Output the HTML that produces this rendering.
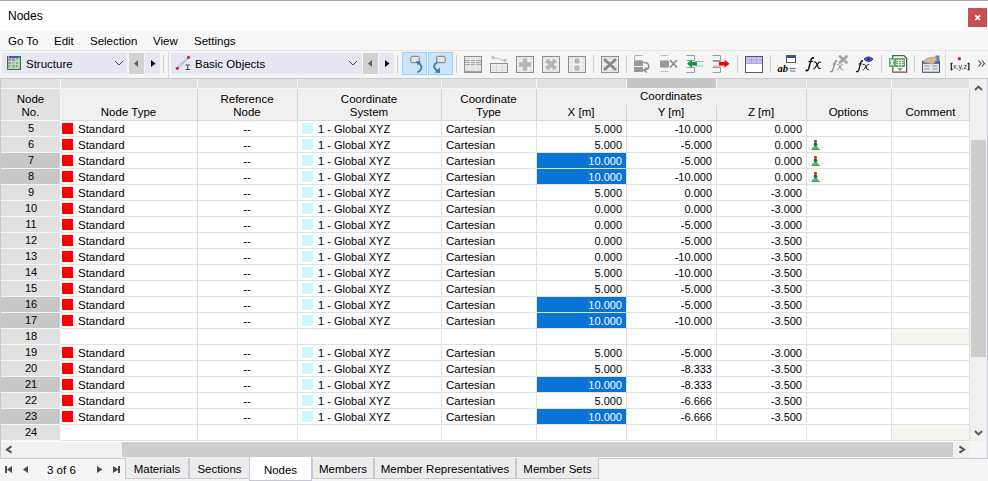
<!DOCTYPE html><html><head><meta charset="utf-8"><style>*{box-sizing:border-box}
html,body{margin:0;padding:0}
body{width:988px;height:481px;overflow:hidden;position:relative;background:#f0f0f0;font-family:"Liberation Sans",sans-serif;font-size:11px;color:#000}
div,svg{position:absolute}
#topline{left:0;top:0;width:988px;height:1px;background:#aaaaaa}
#title{left:0;top:1px;width:988px;height:30px;background:#fff}
#title .tx{left:8px;top:8px;font-size:12px;line-height:14px}
#close{left:968px;top:8px;width:19px;height:19px;background:#c75050}
#menu{left:0;top:31px;width:988px;height:19px;background:#f7f7f7}
#menu .m{top:3px;line-height:14px;font-size:11.5px}
#mline{left:0;top:50px;width:988px;height:1px;background:#e6e6e6}
#tb{left:0;top:51px;width:988px;height:27px;background:#f5f5f5}
.combo{top:53px;height:21px;background:#e6e7f2}
.cbtn{top:53px;height:21px;width:15px;background:#e6e7f2}
.cbtn.g{background:#d2d2d2}
.sep{top:55px;width:1px;height:18px;background:#d0d0d0}
.pb{top:51px;width:1px;height:27px;background:#dcdcdc}
.bb{top:52px;width:25px;height:23px;background:#cce4f7;border:1px solid #99d1ff}
.ct{top:57px;line-height:14px;font-size:11.5px}
#tbline{left:0;top:78px;width:988px;height:1px;background:#c9c9d3}
#grid{left:0;top:0;width:988px;height:481px}
.hstrip{left:1px;top:79px;width:969px;height:9px;background:#e1e1e1}
.hstripdark{top:79px;height:9px;background:#c6c6c6}
.hsep{top:79px;width:1px;height:9px;background:#f7f7f7}
.hmain{left:61px;top:89px;width:909px;height:31px;background:#f0f0f0}
.rhhead{left:1px;top:89px;width:59px;height:31px;background:#e1e1e1}
.rhstrip{left:1px;top:88px;width:969px;height:1px;background:#f7f7f7}
.hvl{width:1px;background:#d2d2d2}
.ht{text-align:center;line-height:14px;font-size:11.5px;white-space:nowrap}
.hbot{left:61px;top:120px;width:909px;height:1px;background:#d9d9d9}
.hbotrh{left:1px;top:120px;width:59px;height:1px;background:#f7f7f7}
.rh{left:1px;width:59px;height:15px;background:#e1e1e1;text-align:center;line-height:15px;font-size:11px;padding-left:1px}
.rh.sel{background:#c8c8c8}
.rl{left:61px;width:909px;height:1px;background:#e0e0e0}
.rowbg{left:61px;width:909px;height:15px;background:#fff}
.red{left:62px;width:11px;height:11px;background:#ff0000}
.cy{left:302px;width:11px;height:11px;background:#ccf7fb}
.t{line-height:15px;font-size:11px;white-space:nowrap;height:15px}
.t.c{text-align:center}
.t.r{text-align:right}
.t.w{color:#fff}
.selc{left:537px;width:89px;height:15px;background:#0a74d6}
.beige{left:892px;width:78px;height:15px;background:#f6f6ef}
.opt{left:810px}
.vl{top:121px;width:1px;height:320px;background:#e0e0e0}
#leftb{left:0;top:79px;width:1px;height:380px;background:#c9c9d3}
#rowsbg{left:61px;top:121px;width:909px;height:320px;background:#fff}
#rhbg{left:1px;top:121px;width:59px;height:320px;background:#e1e1e1}
#vsb{left:970px;top:79px;width:17px;height:362px;background:#f0f0f0}
#vthumb{left:971px;top:140px;width:15px;height:217px;background:#cdcdcd}
#rb{left:987px;top:79px;width:1px;height:380px;background:#c9c9d3}
#hsb{left:1px;top:441px;width:969px;height:17px;background:#f0f0f0;border-top:1px solid #fff}
#hthumb{left:122px;top:442px;width:831px;height:15px;background:#cdcdcd}
#corner{left:970px;top:441px;width:17px;height:17px;background:#f5f5f5}
#bline{left:0;top:458px;width:988px;height:1px;background:#c9c9d6}
#tabbar{left:0;top:459px;width:988px;height:22px;background:#f5f5f5}
.tab{top:458px;height:21px;background:#ececec;border:1px solid #c9c9d6;border-top:none;text-align:center;line-height:14px;padding-top:4px;font-size:11.5px}
.tab.act{top:457px;height:24px;background:#fff;padding-top:6px}
.nav{top:463px}
.wl60{left:60px;top:79px;width:1px;height:362px;background:#f7f7f7}
.rhl{left:1px;width:59px;height:1px;background:#f7f7f7}
.t{padding-top:1px}
</style></head><body>
<div id="topline"></div>
<div id="title"><div class="tx">Nodes</div></div>
<div id="close"><svg width="19" height="19" viewBox="0 0 19 19" style="left:0;top:0"><path d="M7.3 7.3 L12 12 M12 7.3 L7.3 12" stroke="#fff" stroke-width="1.7"/></svg></div>
<div id="menu">
<div class="m" style="left:8px">Go To</div>
<div class="m" style="left:54px">Edit</div>
<div class="m" style="left:90px">Selection</div>
<div class="m" style="left:153px">View</div>
<div class="m" style="left:194px">Settings</div>
</div>
<div id="mline"></div>
<div id="tb"></div>
<div class="combo" style="left:2px;width:125px"></div>
<div class="ct" style="left:26px">Structure</div>
<div class="cbtn g" style="left:129px"></div>
<div class="cbtn" style="left:145px"></div>
<div class="sep" style="left:163px"></div>
<div class="pb" style="left:168px"></div>
<div class="combo" style="left:171px;width:191px"></div>
<div class="ct" style="left:195px">Basic Objects</div>
<div class="cbtn g" style="left:363px"></div>
<div class="cbtn" style="left:379px"></div>
<div class="sep" style="left:397px"></div>
<div class="bb" style="left:402px"></div>
<div class="bb" style="left:428px"></div>
<div class="sep" style="left:456px"></div>
<div class="sep" style="left:593px"></div>
<div class="sep" style="left:626px"></div>
<div class="sep" style="left:737px"></div>
<div class="sep" style="left:770px"></div>
<div class="sep" style="left:881px"></div>
<div class="sep" style="left:914px"></div>
<div class="pb" style="left:945px"></div>
<div id="tbline"></div>

<svg id="icons" style="left:0;top:0" width="988" height="80" viewBox="0 0 988 80">
<!-- structure icon -->
<rect x="7" y="56" width="14" height="14" fill="#5a5a5a"/>
<rect x="8" y="56.2" width="12" height="1.8" fill="#3a5ad0"/>
<rect x="8" y="58" width="12" height="11" fill="#9c9c9c"/>
<path d="M8 61.5H20M8 64.5H20M11.5 58V69M15.5 58V69" stroke="#cfcfcf" stroke-width="1"/>
<circle cx="8.6" cy="57.2" r="0.6" fill="#fff"/>
<path d="M9.3 68.2 L18.8 58.8 L18.8 68.2 Z" fill="none" stroke="#96f096" stroke-width="1.7"/>
<!-- combo1 chevron + arrows -->
<path d="M115 61 L119 65 L123 61" fill="none" stroke="#444" stroke-width="1"/>
<path d="M134 63.5 L138 60 L138 67 Z" fill="#606060"/>
<path d="M151 60 L155.5 63.5 L151 67 Z" fill="#000"/>
<!-- basic objects icon -->
<path d="M177.5 68 L188.5 57.5" stroke="#a9c4e4" stroke-width="2.2"/>
<circle cx="177.3" cy="68.3" r="1.6" fill="#e02020"/>
<circle cx="188.5" cy="57.3" r="1.6" fill="#e02020"/>
<path d="M185.5 65H190M185.5 69.5H190M187.7 65V69.5" stroke="#505050" stroke-width="1"/>
<!-- combo2 chevron + arrows -->
<path d="M349 61 L353 65 L357 61" fill="none" stroke="#444" stroke-width="1"/>
<path d="M368 63.5 L372 60 L372 67 Z" fill="#606060"/>
<path d="M385 60 L389.5 63.5 L385 67 Z" fill="#000"/>
<!-- undo/redo buttons -->
<rect x="410.8" y="56.3" width="8.4" height="6.4" rx="1" fill="#e6e6e6" stroke="#7a7a7a" stroke-width="1"/>
<path d="M417.5 72.5 C421.5 70 423.5 66.5 418.5 62.8" fill="none" stroke="#3d7ab8" stroke-width="1.8"/>
<path d="M416 61 L421 61.5 L417.5 65.5 Z" fill="#3d7ab8"/>
<rect x="436.8" y="56.3" width="8.4" height="6.4" rx="1" fill="#e6e6e6" stroke="#7a7a7a" stroke-width="1"/>
<path d="M437.5 62 C433 64.5 433 68.5 437.5 70.5" fill="none" stroke="#3d7ab8" stroke-width="1.8"/>
<path d="M440 73 L434.5 72.5 L440 67.5 Z" fill="#3d7ab8"/>
<!-- grid icon 1 -->
<rect x="464.5" y="56.5" width="17" height="16" fill="#e4e4e4" stroke="#8e8e8e"/>
<path d="M465 60.5H481M465 62.5H481M465 64.5H481" stroke="#a6a6a6" stroke-width="1.2"/>
<path d="M470.5 57V72M475.5 57V72" stroke="#ececec" stroke-width="1"/>
<path d="M465 71.5H481" stroke="#a0a0a0" stroke-width="1"/>
<!-- grid icon 2 -->
<rect x="490.5" y="63.5" width="17" height="9" fill="#f0f0f0" stroke="#8e8e8e"/>
<path d="M491 67H507M491 70H507M496.5 64V72M502.5 64V72" stroke="#d8d8d8" stroke-width="1"/>
<path d="M493 57.5 L505 60.5" stroke="#c4c4c4" stroke-width="1.2"/>
<circle cx="493" cy="57.5" r="1.7" fill="#c0c0c0"/><circle cx="505" cy="60.5" r="1.7" fill="#c0c0c0"/>
<!-- grid icon 3 plus -->
<rect x="516.5" y="56.5" width="17" height="16" fill="#e6e6e6" stroke="#8e8e8e"/>
<path d="M517 60.5H533M517 64.5H533M517 68.5H533M521.5 57V72M528.5 57V72" stroke="#f4f4f4" stroke-width="1"/>
<path d="M525 58.5V70.5M519 64.5H531" stroke="#b6b6b6" stroke-width="4.5"/>
<!-- grid icon 4 x -->
<rect x="542.5" y="56.5" width="17" height="16" fill="#e6e6e6" stroke="#8e8e8e"/>
<path d="M543 60.5H559M543 64.5H559M543 68.5H559M547.5 57V72M554.5 57V72" stroke="#f4f4f4" stroke-width="1"/>
<path d="M546.5 60 L555.5 69 M555.5 60 L546.5 69" stroke="#b6b6b6" stroke-width="4"/>
<!-- grid icon 5 dots -->
<rect x="568.5" y="56.5" width="17" height="16" fill="#e6e6e6" stroke="#8e8e8e"/>
<path d="M569 60.5H585M569 64.5H585M569 68.5H585M573.5 57V72M580.5 57V72" stroke="#f4f4f4" stroke-width="1"/>
<circle cx="577" cy="60.8" r="2.6" fill="#b6b6b6"/><circle cx="577" cy="68.2" r="2.6" fill="#b6b6b6"/>
<!-- big X -->
<rect x="601.5" y="56.5" width="17" height="16" fill="#e6e6e6" stroke="#8e8e8e"/>
<path d="M602 60.5H618M602 64.5H618M602 68.5H618" stroke="#f4f4f4" stroke-width="1"/>
<path d="M604 59 L616 70 M616 59 L604 70" stroke="#8a8a8a" stroke-width="3"/>
<!-- columns undo -->
<path d="M634.5 55.5H642.5M634.5 60.5H642.5M634.5 55.5V60.5" stroke="#b0b0b0" stroke-width="1" fill="none"/>
<rect x="634" y="61" width="9" height="5" fill="#999"/><rect x="634" y="67" width="9" height="5" fill="#999"/>
<path d="M643.5 62.5 C650 62 650.5 69 645 70" fill="none" stroke="#8a8a8a" stroke-width="1.4"/>
<path d="M647 67.5 L643.5 70.2 L647 72.5" fill="none" stroke="#8a8a8a" stroke-width="1.3"/>
<!-- columns x -->
<path d="M660.5 55.5H668.5M660.5 60.5H668.5M660.5 67.5H668.5M660.5 71.5H668.5" stroke="#c0c0c0" stroke-width="1" fill="none"/>
<rect x="660" y="61" width="9" height="6" fill="#999"/>
<path d="M670 60 L677 67.5 M677 60 L670 67.5" stroke="#8a8a8a" stroke-width="1.6"/>
<!-- green arrow -->
<path d="M686.5 55.5H694.5V60.5H686.5M686.5 67.5H694.5V72.5H686.5" stroke="#9a9a9a" stroke-width="1" fill="none"/>
<path d="M695 61.5H703.5M695 66H703.5" stroke="#7cc894" stroke-width="1"/>
<path d="M687 63.8 L692 59.8 L692 62 L697 62 L697 65.6 L692 65.6 L692 67.8 Z" fill="#0a9a3a"/>
<!-- red arrow -->
<path d="M712.5 55.5H720.5V60.5H712.5M712.5 67.5H720.5V72.5H712.5" stroke="#9a9a9a" stroke-width="1" fill="none"/>
<path d="M713 61.5H721M713 66H721" stroke="#f08080" stroke-width="1"/>
<path d="M729.5 63.8 L724.5 59.8 L724.5 62 L719 62 L719 65.6 L724.5 65.6 L724.5 67.8 Z" fill="#f00000"/>
<!-- table icon -->
<rect x="745.5" y="56.5" width="17" height="16" fill="#fff" stroke="#5a5a5a"/>
<rect x="746" y="57" width="16" height="6" fill="#c4c4ee"/>
<path d="M746 60H762M751.5 57V63M756.5 57V63M746 63.5H762" stroke="#a8a8d8" stroke-width="1"/>
<!-- ab= icon -->
<rect x="786.5" y="55.5" width="9" height="7" fill="#fff" stroke="#5a5a5a"/>
<rect x="787" y="56" width="8" height="2" fill="#3050b8"/>
<text x="777.5" y="72" font-family="Liberation Serif" font-style="italic" font-weight="bold" font-size="10.5" fill="#000">ab</text>
<path d="M790 68.5H795.5M790 71H795.5" stroke="#666" stroke-width="1"/>
<!-- fx icons -->
<defs><g id="fxg"><path d="M-0.3 13 Q1 14.6 2.1 12 L4.6 2.6 Q5.4 0.3 6.9 1" fill="none" stroke-width="1.5"/><circle cx="6.6" cy="1.1" r="0.9" stroke="none"/><circle cx="-0.1" cy="13.4" r="1" stroke="none"/><path d="M1.8 4.5 H6.3" stroke-width="1.1"/><path d="M7.3 5.3 Q9 4.3 9.8 6 L11.8 10.5 Q12.5 12 14.1 11.2" fill="none" stroke-width="1.15"/><path d="M14.3 5.5 Q13.5 4.5 12.3 5.5 L8.7 10.5 Q7.7 12 6.9 11.2" fill="none" stroke-width="1.15"/></g></defs>
<use href="#fxg" transform="translate(806.5 57)" stroke="#111" fill="#111"/>
<use href="#fxg" transform="translate(831 60.1) scale(0.85)" stroke="#8a8a8a" fill="#8a8a8a"/>
<path d="M840 56.5 L846.5 62.5 M846.5 56.5 L840 62.5" stroke="#a4a4a4" stroke-width="2.8" stroke-linecap="round"/>
<use href="#fxg" transform="translate(856.9 60.1) scale(0.85)" stroke="#111" fill="#111"/>
<path d="M864 59.2 Q868.5 54.8 873 59.2 Q868.5 63.6 864 59.2 Z" fill="#3a6ad8" stroke="#2a2a70" stroke-width="1"/>
<circle cx="868.5" cy="59.2" r="1" fill="#101030"/>
<!-- excel -->
<path d="M892.8 55.7H904L906.6 58.3V72.2H892.8Z" fill="#fff" stroke="#5a5a5a" stroke-width="1.3"/>
<rect x="889" y="58" width="16" height="9" fill="#6aa86a"/>
<path d="M890.5 59.5 L893.5 65.5 M893.5 59.5 L890.5 65.5" stroke="#fff" stroke-width="1.2"/>
<path d="M896 60.5H904M896 62.5H904M896 64.5H904M898.5 59V66M901.5 59V66" stroke="#f0f8f0" stroke-width="0.8"/>
<path d="M897 68H903L900 71Z" fill="#6aa86a"/>
<!-- hand/settings -->
<rect x="922.5" y="61.3" width="17" height="11" fill="#e4eaf4" stroke="#555" stroke-width="1.1"/>
<rect x="923" y="61.8" width="16" height="2" fill="#2a5ad8"/>
<path d="M924.5 66H929.5M932.5 66H937.5M924.5 69H929.5M932.5 69H937.5" stroke="#8a8a9a" stroke-width="1"/>
<path d="M935.5 55.5 L939.5 55.5 L939.5 62 L935.5 62 Z" fill="#5a86c8"/>
<path d="M923.5 61.5 Q926 57.5 931 57.5 Q934 56.5 936.5 57.5 Q937.5 60 935 62 Q933 64.5 931.5 64 Q928 62.5 923.5 62.5 Z" fill="#d9b48e" stroke="#b08a64" stroke-width="0.6"/>
<!-- xyz -->
<circle cx="959.4" cy="58.7" r="1.6" fill="#e01010"/>
<path d="M952.5 63.3H951.3V69.7H952.5M967.7 63.3H968.9V69.7H967.7" fill="none" stroke="#111" stroke-width="1.2"/>
<text x="953" y="69.3" font-family="Liberation Sans" font-size="7" fill="#333" textLength="14" lengthAdjust="spacingAndGlyphs">x,y,z</text>
<!-- >> -->
<path d="M978.5 60.5 L981 63.5 L978.5 66.5 M982 60.5 L984.5 63.5 L982 66.5" fill="none" stroke="#444" stroke-width="1.1"/>
</svg>

<div id="grid">
<div id="leftb"></div><div id="rb"></div><div id="rowsbg"></div><div id="rhbg"></div><div id="vsb"></div><div id="vthumb"></div>
<div class="hstrip"></div>
<div class="hsep" style="left:60px"></div>
<div class="hsep" style="left:197px"></div>
<div class="hsep" style="left:297px"></div>
<div class="hsep" style="left:441px"></div>
<div class="hsep" style="left:536px"></div>
<div class="hsep" style="left:626px"></div>
<div class="hsep" style="left:716px"></div>
<div class="hsep" style="left:806px"></div>
<div class="hsep" style="left:891px"></div>
<div class="hsep" style="left:969px"></div>
<div class="hstripdark" style="left:627px;width:89px"></div>
<div class="hmain"></div>
<div class="rhhead"></div>
<div class="rhstrip"></div>
<div class="hvl" style="left:197px;top:89px;height:31px"></div>
<div class="hvl" style="left:297px;top:89px;height:31px"></div>
<div class="hvl" style="left:441px;top:89px;height:31px"></div>
<div class="hvl" style="left:536px;top:89px;height:31px"></div>
<div class="hvl" style="left:626px;top:105px;height:15px"></div>
<div class="hvl" style="left:716px;top:105px;height:15px"></div>
<div class="hvl" style="left:806px;top:89px;height:31px"></div>
<div class="hvl" style="left:891px;top:89px;height:31px"></div>
<div class="hvl" style="left:969px;top:89px;height:31px"></div>
<div class="ht" style="left:1px;width:59px;top:92px">Node</div>
<div class="ht" style="left:1px;width:59px;top:105px">No.</div>
<div class="ht" style="left:60px;width:137px;top:105px">Node Type</div>
<div class="ht" style="left:197px;width:100px;top:92px">Reference</div>
<div class="ht" style="left:197px;width:100px;top:105px">Node</div>
<div class="ht" style="left:297px;width:144px;top:92px">Coordinate</div>
<div class="ht" style="left:297px;width:144px;top:105px">System</div>
<div class="ht" style="left:441px;width:95px;top:92px">Coordinate</div>
<div class="ht" style="left:441px;width:95px;top:105px">Type</div>
<div class="ht" style="left:536px;width:270px;top:89px">Coordinates</div>
<div class="ht" style="left:536px;width:90px;top:105px">X [m]</div>
<div class="ht" style="left:626px;width:90px;top:105px">Y [m]</div>
<div class="ht" style="left:716px;width:90px;top:105px">Z [m]</div>
<div class="ht" style="left:806px;width:85px;top:105px">Options</div>
<div class="ht" style="left:891px;width:79px;top:105px">Comment</div>
<div class="hbot"></div><div class="hbotrh"></div>
<div class="rh" style="top:121px">5</div>
<div class="rl" style="top:136px"></div>
<div class="rhl" style="top:136px"></div>
<div class="red" style="top:123px"></div>
<div class="t" style="left:78px;top:121px;font-size:11.5px">Standard</div>
<div class="t c" style="left:197px;width:100px;top:121px">--</div>
<div class="cy" style="top:123px"></div>
<div class="t" style="left:318px;top:121px">1 - Global XYZ</div>
<div class="t" style="left:446px;top:121px;font-size:11.5px">Cartesian</div>
<div class="t r" style="left:537px;width:85px;top:121px">5.000</div>
<div class="t r" style="left:627px;width:85px;top:121px">-10.000</div>
<div class="t r" style="left:717px;width:85px;top:121px">0.000</div>
<div class="rh" style="top:137px">6</div>
<div class="rl" style="top:152px"></div>
<div class="rhl" style="top:152px"></div>
<div class="red" style="top:139px"></div>
<div class="t" style="left:78px;top:137px;font-size:11.5px">Standard</div>
<div class="t c" style="left:197px;width:100px;top:137px">--</div>
<div class="cy" style="top:139px"></div>
<div class="t" style="left:318px;top:137px">1 - Global XYZ</div>
<div class="t" style="left:446px;top:137px;font-size:11.5px">Cartesian</div>
<div class="t r" style="left:537px;width:85px;top:137px">5.000</div>
<div class="t r" style="left:627px;width:85px;top:137px">-5.000</div>
<div class="t r" style="left:717px;width:85px;top:137px">0.000</div>
<svg class="opt" style="top:139px" width="11" height="12" viewBox="0 0 11 12"><path d="M1 10.8 L4 7 L7 7 L10 10.8 Z" fill="#4fc36b"/><path d="M1 10.8 L10 10.8 L9 9.8 L2 9.8Z" fill="#2e9a4a"/><circle cx="5.5" cy="5.4" r="1.8" fill="#1d6a32"/><circle cx="5.5" cy="2.3" r="1.5" fill="#f01010"/></svg>
<div class="rh sel" style="top:153px">7</div>
<div class="rl" style="top:168px"></div>
<div class="rhl" style="top:168px"></div>
<div class="red" style="top:155px"></div>
<div class="t" style="left:78px;top:153px;font-size:11.5px">Standard</div>
<div class="t c" style="left:197px;width:100px;top:153px">--</div>
<div class="cy" style="top:155px"></div>
<div class="t" style="left:318px;top:153px">1 - Global XYZ</div>
<div class="t" style="left:446px;top:153px;font-size:11.5px">Cartesian</div>
<div class="selc" style="top:153px"></div>
<div class="t r w" style="left:537px;width:85px;top:153px">10.000</div>
<div class="t r" style="left:627px;width:85px;top:153px">-5.000</div>
<div class="t r" style="left:717px;width:85px;top:153px">0.000</div>
<svg class="opt" style="top:155px" width="11" height="12" viewBox="0 0 11 12"><path d="M1 10.8 L4 7 L7 7 L10 10.8 Z" fill="#4fc36b"/><path d="M1 10.8 L10 10.8 L9 9.8 L2 9.8Z" fill="#2e9a4a"/><circle cx="5.5" cy="5.4" r="1.8" fill="#1d6a32"/><circle cx="5.5" cy="2.3" r="1.5" fill="#f01010"/></svg>
<div class="rh sel" style="top:169px">8</div>
<div class="rl" style="top:184px"></div>
<div class="rhl" style="top:184px"></div>
<div class="red" style="top:171px"></div>
<div class="t" style="left:78px;top:169px;font-size:11.5px">Standard</div>
<div class="t c" style="left:197px;width:100px;top:169px">--</div>
<div class="cy" style="top:171px"></div>
<div class="t" style="left:318px;top:169px">1 - Global XYZ</div>
<div class="t" style="left:446px;top:169px;font-size:11.5px">Cartesian</div>
<div class="selc" style="top:169px"></div>
<div class="t r w" style="left:537px;width:85px;top:169px">10.000</div>
<div class="t r" style="left:627px;width:85px;top:169px">-10.000</div>
<div class="t r" style="left:717px;width:85px;top:169px">0.000</div>
<svg class="opt" style="top:171px" width="11" height="12" viewBox="0 0 11 12"><path d="M1 10.8 L4 7 L7 7 L10 10.8 Z" fill="#4fc36b"/><path d="M1 10.8 L10 10.8 L9 9.8 L2 9.8Z" fill="#2e9a4a"/><circle cx="5.5" cy="5.4" r="1.8" fill="#1d6a32"/><circle cx="5.5" cy="2.3" r="1.5" fill="#f01010"/></svg>
<div class="rh" style="top:185px">9</div>
<div class="rl" style="top:200px"></div>
<div class="rhl" style="top:200px"></div>
<div class="red" style="top:187px"></div>
<div class="t" style="left:78px;top:185px;font-size:11.5px">Standard</div>
<div class="t c" style="left:197px;width:100px;top:185px">--</div>
<div class="cy" style="top:187px"></div>
<div class="t" style="left:318px;top:185px">1 - Global XYZ</div>
<div class="t" style="left:446px;top:185px;font-size:11.5px">Cartesian</div>
<div class="t r" style="left:537px;width:85px;top:185px">5.000</div>
<div class="t r" style="left:627px;width:85px;top:185px">0.000</div>
<div class="t r" style="left:717px;width:85px;top:185px">-3.000</div>
<div class="rh" style="top:201px">10</div>
<div class="rl" style="top:216px"></div>
<div class="rhl" style="top:216px"></div>
<div class="red" style="top:203px"></div>
<div class="t" style="left:78px;top:201px;font-size:11.5px">Standard</div>
<div class="t c" style="left:197px;width:100px;top:201px">--</div>
<div class="cy" style="top:203px"></div>
<div class="t" style="left:318px;top:201px">1 - Global XYZ</div>
<div class="t" style="left:446px;top:201px;font-size:11.5px">Cartesian</div>
<div class="t r" style="left:537px;width:85px;top:201px">0.000</div>
<div class="t r" style="left:627px;width:85px;top:201px">0.000</div>
<div class="t r" style="left:717px;width:85px;top:201px">-3.000</div>
<div class="rh" style="top:217px">11</div>
<div class="rl" style="top:232px"></div>
<div class="rhl" style="top:232px"></div>
<div class="red" style="top:219px"></div>
<div class="t" style="left:78px;top:217px;font-size:11.5px">Standard</div>
<div class="t c" style="left:197px;width:100px;top:217px">--</div>
<div class="cy" style="top:219px"></div>
<div class="t" style="left:318px;top:217px">1 - Global XYZ</div>
<div class="t" style="left:446px;top:217px;font-size:11.5px">Cartesian</div>
<div class="t r" style="left:537px;width:85px;top:217px">0.000</div>
<div class="t r" style="left:627px;width:85px;top:217px">-5.000</div>
<div class="t r" style="left:717px;width:85px;top:217px">-3.000</div>
<div class="rh" style="top:233px">12</div>
<div class="rl" style="top:248px"></div>
<div class="rhl" style="top:248px"></div>
<div class="red" style="top:235px"></div>
<div class="t" style="left:78px;top:233px;font-size:11.5px">Standard</div>
<div class="t c" style="left:197px;width:100px;top:233px">--</div>
<div class="cy" style="top:235px"></div>
<div class="t" style="left:318px;top:233px">1 - Global XYZ</div>
<div class="t" style="left:446px;top:233px;font-size:11.5px">Cartesian</div>
<div class="t r" style="left:537px;width:85px;top:233px">0.000</div>
<div class="t r" style="left:627px;width:85px;top:233px">-5.000</div>
<div class="t r" style="left:717px;width:85px;top:233px">-3.500</div>
<div class="rh" style="top:249px">13</div>
<div class="rl" style="top:264px"></div>
<div class="rhl" style="top:264px"></div>
<div class="red" style="top:251px"></div>
<div class="t" style="left:78px;top:249px;font-size:11.5px">Standard</div>
<div class="t c" style="left:197px;width:100px;top:249px">--</div>
<div class="cy" style="top:251px"></div>
<div class="t" style="left:318px;top:249px">1 - Global XYZ</div>
<div class="t" style="left:446px;top:249px;font-size:11.5px">Cartesian</div>
<div class="t r" style="left:537px;width:85px;top:249px">0.000</div>
<div class="t r" style="left:627px;width:85px;top:249px">-10.000</div>
<div class="t r" style="left:717px;width:85px;top:249px">-3.500</div>
<div class="rh" style="top:265px">14</div>
<div class="rl" style="top:280px"></div>
<div class="rhl" style="top:280px"></div>
<div class="red" style="top:267px"></div>
<div class="t" style="left:78px;top:265px;font-size:11.5px">Standard</div>
<div class="t c" style="left:197px;width:100px;top:265px">--</div>
<div class="cy" style="top:267px"></div>
<div class="t" style="left:318px;top:265px">1 - Global XYZ</div>
<div class="t" style="left:446px;top:265px;font-size:11.5px">Cartesian</div>
<div class="t r" style="left:537px;width:85px;top:265px">5.000</div>
<div class="t r" style="left:627px;width:85px;top:265px">-10.000</div>
<div class="t r" style="left:717px;width:85px;top:265px">-3.500</div>
<div class="rh" style="top:281px">15</div>
<div class="rl" style="top:296px"></div>
<div class="rhl" style="top:296px"></div>
<div class="red" style="top:283px"></div>
<div class="t" style="left:78px;top:281px;font-size:11.5px">Standard</div>
<div class="t c" style="left:197px;width:100px;top:281px">--</div>
<div class="cy" style="top:283px"></div>
<div class="t" style="left:318px;top:281px">1 - Global XYZ</div>
<div class="t" style="left:446px;top:281px;font-size:11.5px">Cartesian</div>
<div class="t r" style="left:537px;width:85px;top:281px">5.000</div>
<div class="t r" style="left:627px;width:85px;top:281px">-5.000</div>
<div class="t r" style="left:717px;width:85px;top:281px">-3.500</div>
<div class="rh sel" style="top:297px">16</div>
<div class="rl" style="top:312px"></div>
<div class="rhl" style="top:312px"></div>
<div class="red" style="top:299px"></div>
<div class="t" style="left:78px;top:297px;font-size:11.5px">Standard</div>
<div class="t c" style="left:197px;width:100px;top:297px">--</div>
<div class="cy" style="top:299px"></div>
<div class="t" style="left:318px;top:297px">1 - Global XYZ</div>
<div class="t" style="left:446px;top:297px;font-size:11.5px">Cartesian</div>
<div class="selc" style="top:297px"></div>
<div class="t r w" style="left:537px;width:85px;top:297px">10.000</div>
<div class="t r" style="left:627px;width:85px;top:297px">-5.000</div>
<div class="t r" style="left:717px;width:85px;top:297px">-3.500</div>
<div class="rh sel" style="top:313px">17</div>
<div class="rl" style="top:328px"></div>
<div class="rhl" style="top:328px"></div>
<div class="red" style="top:315px"></div>
<div class="t" style="left:78px;top:313px;font-size:11.5px">Standard</div>
<div class="t c" style="left:197px;width:100px;top:313px">--</div>
<div class="cy" style="top:315px"></div>
<div class="t" style="left:318px;top:313px">1 - Global XYZ</div>
<div class="t" style="left:446px;top:313px;font-size:11.5px">Cartesian</div>
<div class="selc" style="top:313px"></div>
<div class="t r w" style="left:537px;width:85px;top:313px">10.000</div>
<div class="t r" style="left:627px;width:85px;top:313px">-10.000</div>
<div class="t r" style="left:717px;width:85px;top:313px">-3.500</div>
<div class="rh" style="top:329px">18</div>
<div class="rl" style="top:344px"></div>
<div class="rhl" style="top:344px"></div>
<div class="beige" style="top:329px"></div>
<div class="rh" style="top:345px">19</div>
<div class="rl" style="top:360px"></div>
<div class="rhl" style="top:360px"></div>
<div class="red" style="top:347px"></div>
<div class="t" style="left:78px;top:345px;font-size:11.5px">Standard</div>
<div class="t c" style="left:197px;width:100px;top:345px">--</div>
<div class="cy" style="top:347px"></div>
<div class="t" style="left:318px;top:345px">1 - Global XYZ</div>
<div class="t" style="left:446px;top:345px;font-size:11.5px">Cartesian</div>
<div class="t r" style="left:537px;width:85px;top:345px">5.000</div>
<div class="t r" style="left:627px;width:85px;top:345px">-5.000</div>
<div class="t r" style="left:717px;width:85px;top:345px">-3.000</div>
<div class="rh" style="top:361px">20</div>
<div class="rl" style="top:376px"></div>
<div class="rhl" style="top:376px"></div>
<div class="red" style="top:363px"></div>
<div class="t" style="left:78px;top:361px;font-size:11.5px">Standard</div>
<div class="t c" style="left:197px;width:100px;top:361px">--</div>
<div class="cy" style="top:363px"></div>
<div class="t" style="left:318px;top:361px">1 - Global XYZ</div>
<div class="t" style="left:446px;top:361px;font-size:11.5px">Cartesian</div>
<div class="t r" style="left:537px;width:85px;top:361px">5.000</div>
<div class="t r" style="left:627px;width:85px;top:361px">-8.333</div>
<div class="t r" style="left:717px;width:85px;top:361px">-3.500</div>
<div class="rh sel" style="top:377px">21</div>
<div class="rl" style="top:392px"></div>
<div class="rhl" style="top:392px"></div>
<div class="red" style="top:379px"></div>
<div class="t" style="left:78px;top:377px;font-size:11.5px">Standard</div>
<div class="t c" style="left:197px;width:100px;top:377px">--</div>
<div class="cy" style="top:379px"></div>
<div class="t" style="left:318px;top:377px">1 - Global XYZ</div>
<div class="t" style="left:446px;top:377px;font-size:11.5px">Cartesian</div>
<div class="selc" style="top:377px"></div>
<div class="t r w" style="left:537px;width:85px;top:377px">10.000</div>
<div class="t r" style="left:627px;width:85px;top:377px">-8.333</div>
<div class="t r" style="left:717px;width:85px;top:377px">-3.500</div>
<div class="rh" style="top:393px">22</div>
<div class="rl" style="top:408px"></div>
<div class="rhl" style="top:408px"></div>
<div class="red" style="top:395px"></div>
<div class="t" style="left:78px;top:393px;font-size:11.5px">Standard</div>
<div class="t c" style="left:197px;width:100px;top:393px">--</div>
<div class="cy" style="top:395px"></div>
<div class="t" style="left:318px;top:393px">1 - Global XYZ</div>
<div class="t" style="left:446px;top:393px;font-size:11.5px">Cartesian</div>
<div class="t r" style="left:537px;width:85px;top:393px">5.000</div>
<div class="t r" style="left:627px;width:85px;top:393px">-6.666</div>
<div class="t r" style="left:717px;width:85px;top:393px">-3.500</div>
<div class="rh sel" style="top:409px">23</div>
<div class="rl" style="top:424px"></div>
<div class="rhl" style="top:424px"></div>
<div class="red" style="top:411px"></div>
<div class="t" style="left:78px;top:409px;font-size:11.5px">Standard</div>
<div class="t c" style="left:197px;width:100px;top:409px">--</div>
<div class="cy" style="top:411px"></div>
<div class="t" style="left:318px;top:409px">1 - Global XYZ</div>
<div class="t" style="left:446px;top:409px;font-size:11.5px">Cartesian</div>
<div class="selc" style="top:409px"></div>
<div class="t r w" style="left:537px;width:85px;top:409px">10.000</div>
<div class="t r" style="left:627px;width:85px;top:409px">-6.666</div>
<div class="t r" style="left:717px;width:85px;top:409px">-3.500</div>
<div class="rh" style="top:425px">24</div>
<div class="rl" style="top:440px"></div>
<div class="rhl" style="top:440px"></div>
<div class="beige" style="top:425px"></div>
<div class="vl" style="left:197px"></div>
<div class="vl" style="left:297px"></div>
<div class="vl" style="left:441px"></div>
<div class="vl" style="left:536px"></div>
<div class="vl" style="left:626px"></div>
<div class="vl" style="left:716px"></div>
<div class="vl" style="left:806px"></div>
<div class="vl" style="left:891px"></div>
<div class="vl" style="left:969px"></div>
<div class="wl60"></div>
</div>
<div id="hsb"></div>
<div id="hthumb"></div>
<div id="corner"></div>
<div id="bline"></div>
<div id="tabbar"></div>
<div class="tab" style="left:125px;width:64px">Materials</div>
<div class="tab" style="left:189px;width:61px">Sections</div>
<div class="tab act" style="left:249px;width:63px">Nodes</div>
<div class="tab" style="left:312px;width:62px">Members</div>
<div class="tab" style="left:374px;width:142px">Member Representatives</div>
<div class="tab" style="left:516px;width:83px">Member Sets</div>
<div class="ct" style="left:47px;top:463px">3 of 6</div>
<svg style="left:0;top:440px" width="130" height="41" viewBox="0 440 130 41">
<path d="M11.5 446.3 L7 449.5 L11.5 452.7" fill="none" stroke="#555" stroke-width="2.1"/>
<rect x="5" y="466" width="2" height="7" fill="#4a4a4a"/>
<path d="M7 469.5 L12 466 L12 473 Z" fill="#4a4a4a"/>
<path d="M23 469.5 L28 466 L28 473 Z" fill="#4a4a4a"/>
<path d="M102.5 469.5 L97 466 L97 473 Z" fill="#4a4a4a"/>
<path d="M118.5 469.5 L113 466 L113 473 Z" fill="#4a4a4a"/>
<rect x="118" y="466" width="2" height="7" fill="#4a4a4a"/>
</svg>
<svg style="left:950px;top:79px" width="38" height="380" viewBox="950 79 38 380">
<path d="M975 90 L978.5 86.5 L982 90" fill="none" stroke="#555" stroke-width="1.8"/>
<path d="M975 431 L978.5 434.5 L982 431" fill="none" stroke="#555" stroke-width="1.8"/>
<path d="M959.5 446.3 L964 449.5 L959.5 452.7" fill="none" stroke="#555" stroke-width="2.1"/>
</svg>

</body></html>
